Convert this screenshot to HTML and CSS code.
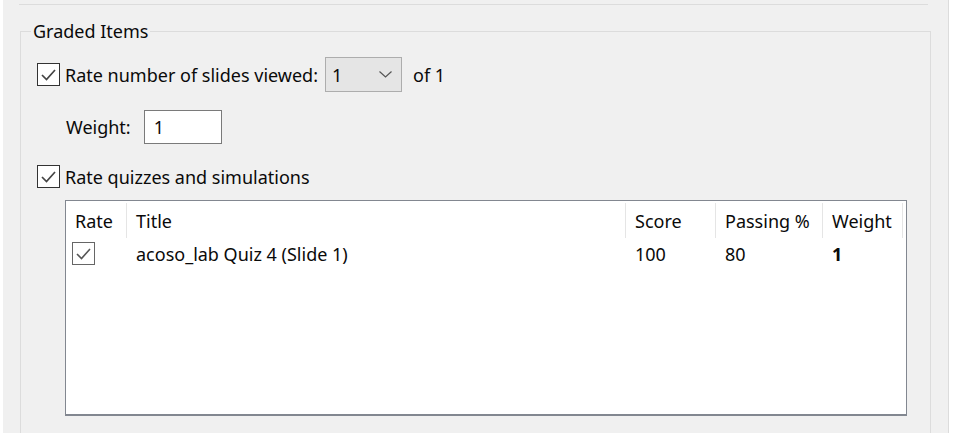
FILE: index.html
```html
<!DOCTYPE html>
<html>
<head>
<meta charset="utf-8">
<link rel="stylesheet" href="styles.css">
</head>
<body>
<div class="panel">
  <div class="topline"></div>
  <fieldset class="group">
    <legend class="legend">Graded Items</legend>
    <div class="row row-slides">
      <span class="cb"><svg viewBox="0 0 21 21" width="21" height="21"><polyline points="4,11 8.5,15.5 17,6" fill="none" stroke="#444" stroke-width="1.7"/></svg></span>
      <span class="lbl">Rate number of slides viewed:</span>
      <span class="combo"><span class="combo-val">1</span><svg class="chev" viewBox="0 0 13 7" width="13" height="7"><polyline points="0.5,0.5 6.5,6 12.5,0.5" fill="none" stroke="#555" stroke-width="1.2"/></svg></span>
      <span class="of">of 1</span>
    </div>
    <div class="row row-weight">
      <span class="lbl">Weight:</span>
      <span class="input">1</span>
    </div>
    <div class="row row-quiz">
      <span class="cb"><svg viewBox="0 0 21 21" width="21" height="21"><polyline points="4,11 8.5,15.5 17,6" fill="none" stroke="#444" stroke-width="1.7"/></svg></span>
      <span class="lbl">Rate quizzes and simulations</span>
    </div>
    <div class="list">
      <div class="grid head">
        <div class="hc">Rate</div>
        <div class="hc">Title</div>
        <div class="hc">Score</div>
        <div class="hc">Passing %</div>
        <div class="hc">Weight</div>
      </div>
      <div class="grid item">
        <div class="c"><span class="cb cb-row"><svg viewBox="0 0 21 21" width="21" height="21"><polyline points="4,11 8.5,15.5 17,6" fill="none" stroke="#555" stroke-width="1.6"/></svg></span></div>
        <div class="c">acoso_lab Quiz 4 (Slide 1)</div>
        <div class="c">100</div>
        <div class="c">80</div>
        <div class="c bold">1</div>
      </div>
    </div>
  </fieldset>
</div>
</body>
</html>
```

FILE: styles.css
```css
html, body {
  margin: 0;
  padding: 0;
  background: #ffffff;
}
body {
  font-family: "Noto Sans", "Open Sans", sans-serif;
  font-size: 18px;
  color: #0a0a0a;
}
.panel {
  margin-left: 3px;
  width: 945px;
  height: 433px;
  background: #f0f0f0;
  border-right: 1px solid #dcdcdc;
  overflow: hidden;
}
.topline {
  margin-left: 16px;
  width: 909px;
  height: 4px;
  border-bottom: 1px solid #dcdcdc;
}
.group {
  margin: 14px 0 0 17px;
  width: 911px;
  height: 420px;
  padding: 0 10px;
  border: 1px solid #dcdcdc;
  border-bottom: none;
  box-sizing: border-box;
}
.legend {
  padding: 0 2px;
  line-height: 24px;
}
.row {
  display: flex;
  align-items: center;
}
.row-slides {
  margin-top: 14px;
  margin-left: 6px;
  height: 35px;
}
.cb {
  width: 21px;
  height: 21px;
  border: 1px solid #333;
  background: #fff;
  display: inline-flex;
  flex: none;
}
.lbl {
  margin-left: 5px;
}
.combo {
  margin-left: 7px;
  width: 77px;
  height: 35px;
  border: 1px solid #adadad;
  background: #e5e5e5;
  display: flex;
  align-items: center;
  justify-content: space-between;
  padding: 0 9px 0 6px;
  box-sizing: border-box;
}
.chev { display: block; }
.of {
  margin-left: 11px;
}
.row-weight {
  margin-top: 18px;
  margin-left: 30px;
  height: 34px;
}
.input {
  margin-left: 13px;
  width: 78px;
  height: 34px;
  box-sizing: border-box;
  border: 1px solid #7a7a7a;
  background: #fff;
  padding-left: 9px;
  display: flex;
  align-items: center;
}
.row-quiz {
  margin-top: 21px;
  margin-left: 6px;
  height: 23px;
}
.list {
  margin-top: 12px;
  margin-left: 34px;
  width: 842px;
  height: 216px;
  box-sizing: border-box;
  border: 1px solid #828790;
  border-bottom-width: 2px;
  background: #fff;
}
.grid {
  display: grid;
  grid-template-columns: 61px 499px 90px 107px 80px;
}
.head {
  height: 37px;
}
.hc {
  margin-top: 2px;
  height: 35px;
  border-right: 1px solid #e5e5e5;
  padding-left: 9px;
  display: flex;
  align-items: center;
}
.item {
  height: 31px;
}
.c {
  padding-left: 9px;
  display: flex;
  align-items: center;
}
.c:first-child {
  padding-left: 6px;
}
.cb-row {
  border-color: #666;
}
.bold {
  font-weight: bold;
}
```
